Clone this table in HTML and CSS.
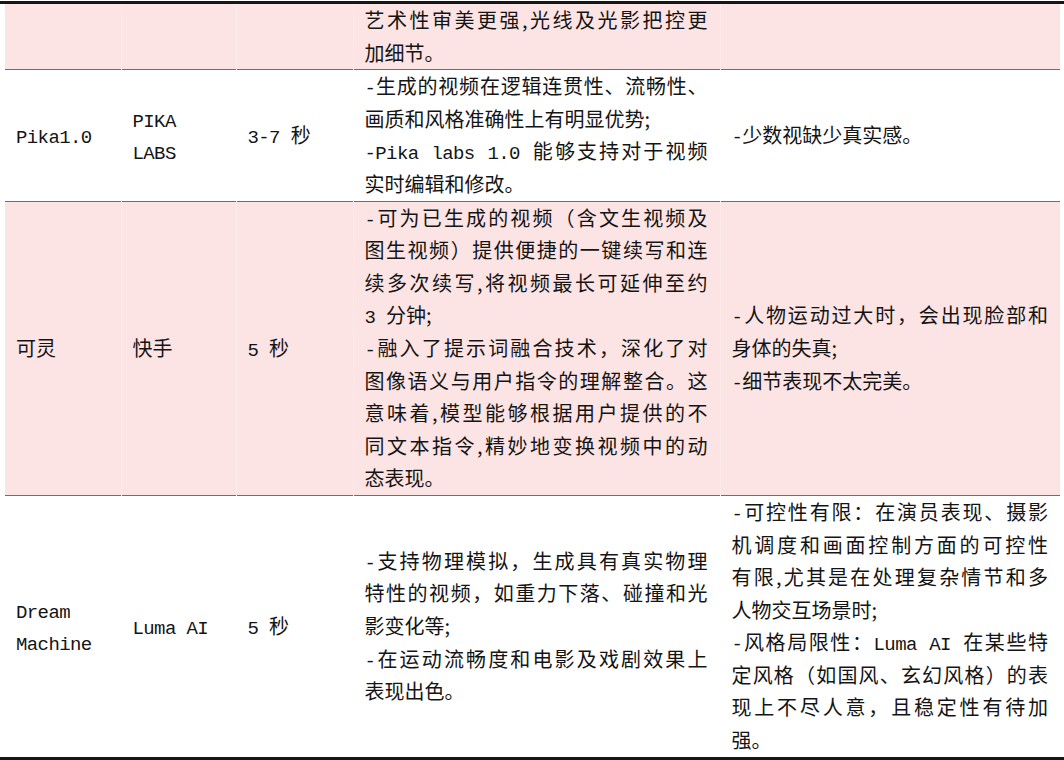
FILE: index.html
```html
<!DOCTYPE html>
<html lang="zh-CN">
<head>
<meta charset="utf-8">
<title>视频生成模型对比</title>
<link rel="stylesheet" href="styles.css">
</head>
<body>
<div class="sheet">
<table class="grid">
<colgroup>
<col class="c1"><col class="c2"><col class="c3"><col class="c4"><col class="c5">
</colgroup>
<tbody>
<tr class="pink">
<td></td><td></td><td></td>
<td>
<div class="ln j">艺术性审美更强,光线及光影把控更</div>
<div class="ln">加细节。</div>
</td>
<td></td>
</tr>
<tr>
<td><div class="ln"><span class="l">Pika1.0</span></div></td>
<td><div class="ln"><span class="l">PIKA</span></div><div class="ln"><span class="l">LABS</span></div></td>
<td><div class="ln"><span class="l">3-7 </span>秒</div></td>
<td>
<div class="ln j"><span class="l">-</span>生成的视频在逻辑连贯性、流畅性、</div>
<div class="ln">画质和风格准确性上有明显优势;</div>
<div class="ln j"><span class="l">-Pika labs 1.0 </span>能够支持对于视频</div>
<div class="ln">实时编辑和修改。</div>
</td>
<td><div class="ln"><span class="l">-</span>少数视缺少真实感。</div></td>
</tr>
<tr class="pink">
<td><div class="ln">可灵</div></td>
<td><div class="ln">快手</div></td>
<td><div class="ln"><span class="l">5 </span>秒</div></td>
<td>
<div class="ln j"><span class="l">-</span>可为已生成的视频（含文生视频及</div>
<div class="ln j">图生视频）提供便捷的一键续写和连</div>
<div class="ln j">续多次续写,将视频最长可延伸至约</div>
<div class="ln"><span class="l">3 </span>分钟;</div>
<div class="ln j"><span class="l">-</span>融入了提示词融合技术，深化了对</div>
<div class="ln j">图像语义与用户指令的理解整合。这</div>
<div class="ln j">意味着,模型能够根据用户提供的不</div>
<div class="ln j">同文本指令,精妙地变换视频中的动</div>
<div class="ln">态表现。</div>
</td>
<td>
<div class="ln j"><span class="l">-</span>人物运动过大时，会出现脸部和</div>
<div class="ln">身体的失真;</div>
<div class="ln"><span class="l">-</span>细节表现不太完美。</div>
</td>
</tr>
<tr>
<td><div class="ln"><span class="l">Dream</span></div><div class="ln"><span class="l">Machine</span></div></td>
<td><div class="ln"><span class="l">Luma AI</span></div></td>
<td><div class="ln"><span class="l">5 </span>秒</div></td>
<td>
<div class="ln j"><span class="l">-</span>支持物理模拟，生成具有真实物理</div>
<div class="ln j">特性的视频，如重力下落、碰撞和光</div>
<div class="ln">影变化等;</div>
<div class="ln j"><span class="l">-</span>在运动流畅度和电影及戏剧效果上</div>
<div class="ln">表现出色。</div>
</td>
<td>
<div class="ln j"><span class="l">-</span>可控性有限：在演员表现、摄影</div>
<div class="ln j">机调度和画面控制方面的可控性</div>
<div class="ln j">有限,尤其是在处理复杂情节和多</div>
<div class="ln">人物交互场景时;</div>
<div class="ln j"><span class="l">-</span>风格局限性：<span class="l">Luma AI </span>在某些特</div>
<div class="ln j">定风格（如国风、玄幻风格）的表</div>
<div class="ln j">现上不尽人意，且稳定性有待加</div>
<div class="ln">强。</div>
</td>
</tr>
</tbody>
</table>
</div>
</body>
</html>
```

FILE: styles.css
```css
html, body {
  margin: 0;
  padding: 0;
  background: #ffffff;
}

body {
  font-family: "Noto Sans CJK SC", sans-serif;
  color: #141414;
}

.sheet {
  margin-top: 1px;
  border-top: 3px solid #161616;
  border-bottom: 3px solid #161616;
}

.grid {
  width: 1055px;
  margin-left: 5px;
  border-collapse: collapse;
  table-layout: fixed;
  font-size: 20px;
  line-height: 32.6px;
}

.c1 { width: 116px; }
.c2 { width: 115px; }
.c3 { width: 117px; }
.c4 { width: 367px; }
.c5 { width: 340px; }

.grid tr {
  border-bottom: 1px solid #6e6e6e;
}

.grid tr:last-child {
  border-bottom: none;
}

.grid td {
  padding: 0 12px 0 11px;
  vertical-align: middle;
}

.grid td + td {
  border-left: 1px solid transparent;
}

.pink td {
  background: #fde4e4;
}

.pink td + td {
  border-left: 1px solid #fdeaea;
}

.ln {
  height: 32.6px;
  line-height: 32.6px;
  white-space: nowrap;
  text-align: left;
}

.j {
  text-align: justify;
  text-align-last: justify;
}

.l {
  font-family: "Liberation Mono", monospace;
  font-size: 19px;
  letter-spacing: -0.6px;
}
```
